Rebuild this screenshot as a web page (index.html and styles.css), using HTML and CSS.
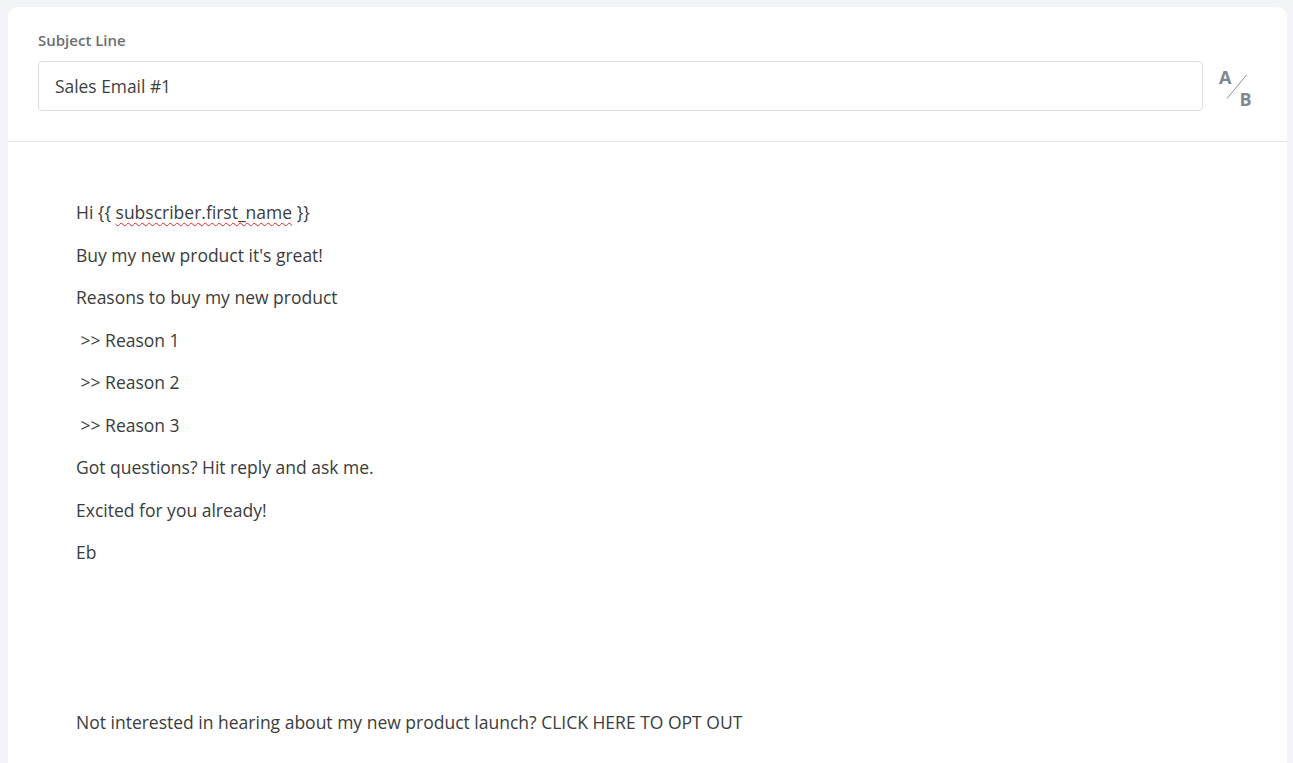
FILE: index.html
```html
<!DOCTYPE html>
<html>
<head>
<meta charset="utf-8">
<link rel="stylesheet" href="styles.css">
</head>
<body>
<div class="card">
  <div class="header">
    <div class="label">Subject Line</div>
    <div class="row">
      <div class="input">Sales Email #1</div>
      <div class="ab">
        <span class="ab-a">A</span>
        <svg class="ab-slash" width="40" height="44" viewBox="0 0 40 44"><line x1="12" y1="34.5" x2="31.5" y2="11" stroke="#8a9199" stroke-width="1"/></svg>
        <span class="ab-b">B</span>
      </div>
    </div>
  </div>
  <div class="body">
    <p>Hi {{ <span class="spell">subscriber.first_name</span> }}</p>
    <p>Buy my new product it's great!</p>
    <p>Reasons to buy my new product</p>
    <p>&nbsp;&gt;&gt; Reason 1</p>
    <p>&nbsp;&gt;&gt; Reason 2</p>
    <p>&nbsp;&gt;&gt; Reason 3</p>
    <p>Got questions? Hit reply and ask me.</p>
    <p>Excited for you already!</p>
    <p>Eb</p>
    <p>&nbsp;</p>
    <p>&nbsp;</p>
    <p>&nbsp;</p>
    <p>Not interested in hearing about my new product launch? CLICK HERE TO OPT OUT</p>
  </div>
</div>
</body>
</html>
```

FILE: styles.css
```css
html, body {
  margin: 0;
  padding: 0;
  background: #f3f4f7;
  font-family: "Open Sans", "Liberation Sans", sans-serif;
  overflow: hidden;
  height: 763px;
}
.card {
  margin: 7px 6px 0 8px;
  background: #ffffff;
  border-radius: 10px 10px 0 0;
  height: 756px;
}
.header {
  padding: 23px 30px 30px 30px;
  border-bottom: 1px solid #e2e4e7;
}
.label {
  font-size: 15px;
  line-height: 20px;
  font-weight: 600;
  color: #6b6e72;
  margin-bottom: 11px;
}
.row {
  display: flex;
  align-items: center;
}
.input {
  flex: 1;
  height: 48px;
  border: 1px solid #dcdee1;
  border-radius: 4px;
  padding: 0 16px;
  font-size: 17.4px;
  line-height: 48px;
  color: #3c3f42;
}
.ab {
  position: relative;
  width: 40px;
  height: 44px;
  margin-left: 12px;
  margin-right: 2px;
  color: #7f8891;
  font-weight: 700;
  font-size: 18px;
  line-height: 18px;
}
.ab-slash {
  position: absolute;
  left: 0;
  top: 0;
}
.ab-a {
  position: absolute;
  left: 4px;
  top: 4px;
}
.ab-b {
  position: absolute;
  left: 24.5px;
  top: 26px;
}
.body {
  padding: 57px 68px 0 68px;
  color: #3a3c3e;
  font-size: 17.5px;
}
.body p {
  margin: 0 0 16px 0;
  line-height: 26.5px;
}
.spell {
  text-decoration: underline wavy #e0262b;
  text-decoration-thickness: 1px;
  text-underline-offset: 3px;
}
```
